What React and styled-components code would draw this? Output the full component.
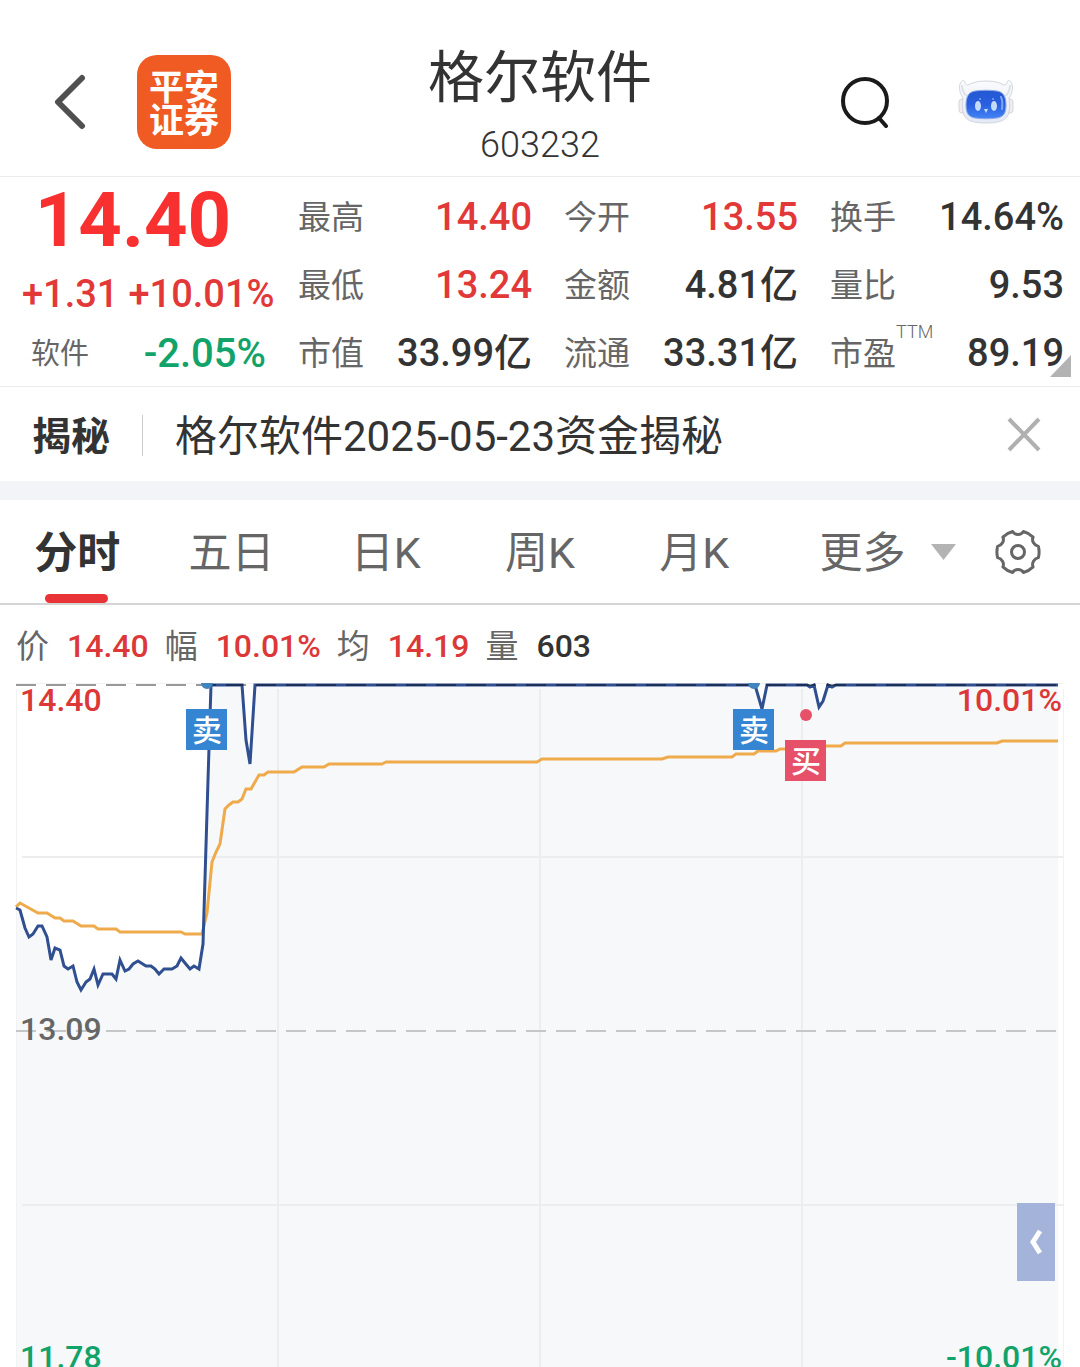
import { useState } from "react";
import styled, { createGlobalStyle } from "styled-components";

const GlobalStyle = createGlobalStyle`
  * {
    box-sizing: border-box;
  }

  body {
    margin: 0;
    background: #ffffff;
    color: #333333;
    font-family: Roboto, "Noto Sans CJK SC", sans-serif;
  }

  button {
    border: none;
    padding: 0;
    background: transparent;
    color: inherit;
    font: inherit;
    cursor: pointer;
  }
`;

const Page = styled.div`
  display: flex;
  flex-direction: column;
  min-height: 100vh;
`;

const Header = styled.header`
  display: grid;
  grid-template-columns: 1fr auto 1fr;
  align-items: center;
  padding: 34px 54px 6px;
  border-bottom: 1px solid #ebebeb;
`;

const HeaderSide = styled.div`
  display: flex;
  align-items: center;
  justify-content: ${(props) => (props.$end ? "flex-end" : "flex-start")};
  gap: ${(props) => (props.$end ? "68px" : "51px")};
  padding-right: ${(props) => (props.$end ? "12px" : "0")};
`;

const IconButton = styled.button`
  display: flex;
  flex: none;
`;

const BrokerLogo = styled.a`
  display: flex;
  flex-direction: column;
  align-items: center;
  justify-content: center;
  width: 94px;
  height: 94px;
  padding-bottom: 2px;
  border-radius: 20px;
  background: #f05a23;
  color: #ffffff;
  font-family: "Noto Sans CJK SC", sans-serif;
  font-size: 35px;
  font-weight: 700;
  line-height: 33px;
  text-decoration: none;
`;

const Title = styled.div`
  padding-top: 2px;
  text-align: center;
`;

const StockName = styled.h1`
  margin: 0;
  font-size: 56px;
  font-weight: 400;
  line-height: 84px;
`;

const StockCode = styled.p`
  margin: 0;
  font-size: 36px;
  font-weight: 300;
  line-height: 50px;
`;

const Quote = styled.section`
  position: relative;
  display: grid;
  grid-template-columns: 266px 1fr;
  column-gap: 32px;
  padding-right: 16px;
  border-bottom: 1px solid #ebebeb;
`;

const PriceColumn = styled.div`
  display: flex;
  flex-direction: column;
  padding-top: 1px;
`;

const Price = styled.strong`
  color: #f93030;
  font-size: 76px;
  font-weight: 700;
  line-height: 84px;
  text-align: center;
`;

const Change = styled.div`
  display: flex;
  gap: 10px;
  padding-left: 22px;
  color: #e23838;
  font-size: 38px;
  font-weight: 500;
  line-height: 64px;
  white-space: nowrap;
`;

const Sector = styled.div`
  display: flex;
  align-items: center;
  justify-content: space-between;
  padding-left: 31px;
  color: #666666;
  font-size: 29px;
  line-height: 56px;
`;

const SectorChange = styled.span`
  color: #12a36a;
  font-size: 40px;
  font-weight: 500;
`;

const Stats = styled.dl`
  display: grid;
  grid-template-columns: repeat(3, 1fr);
  column-gap: 32px;
  margin: 0;
  padding-top: 5px;
`;

const Stat = styled.div`
  display: flex;
  align-items: center;
  justify-content: space-between;
  height: 68px;
`;

const StatLabel = styled.dt`
  display: flex;
  padding-top: 4px;
  color: #666666;
  font-size: 33px;
  line-height: 64px;
  white-space: nowrap;
`;

const StatNote = styled.sup`
  font-size: 18px;
  font-weight: 300;
  line-height: 20px;
`;

const StatValue = styled.dd`
  margin: 0;
  padding-top: 2px;
  color: ${(props) => (props.$up ? "#e23838" : "#333333")};
  font-size: 38px;
  font-weight: 500;
  line-height: 66px;
  white-space: nowrap;
`;

const Corner = styled.button`
  position: absolute;
  right: 9px;
  bottom: 9px;
  width: 21px;
  height: 22px;
  background: #b3b3b3;
  clip-path: polygon(100% 0, 100% 100%, 0 100%);
`;

const News = styled.section`
  display: flex;
  align-items: center;
  height: 94px;
  padding: 2px 39px 0 32px;
`;

const NewsTag = styled.strong`
  padding: 4px 32px 0 0;
  font-size: 39px;
  font-weight: 700;
  line-height: 60px;
`;

const NewsLink = styled.a`
  flex: 1;
  padding-top: 4px;
  color: inherit;
  font-size: 42px;
  line-height: 60px;
  text-decoration: none;
`;

const Divider = styled.span`
  width: 1px;
  height: 41px;
  margin-right: 32px;
  background: #cccccc;
`;

const Band = styled.div`
  height: 19px;
  background: #f3f4f8;
`;

const Tabs = styled.nav`
  display: grid;
  grid-template-columns: repeat(5, minmax(0, 1fr)) minmax(0, 2fr);
  border-bottom: 2px solid #d4d4d4;
`;

const Tab = styled.button`
  position: relative;
  height: 103px;
  padding-bottom: 5px;
  color: ${(props) => (props.$active ? "#333333" : "#666666")};
  font-size: 43px;
  font-weight: ${(props) => (props.$active ? 700 : 400)};

  &::after {
    content: "";
    display: ${(props) => (props.$active ? "block" : "none")};
    position: absolute;
    left: calc(50% - 32px);
    bottom: 0;
    width: 63px;
    height: 9px;
    border-radius: 5px;
    background: #e83436;
  }
`;

const TabTools = styled.div`
  display: flex;
  align-items: center;
  justify-content: space-between;
  padding: 0 39px 0 48px;
`;

const MoreButton = styled.button`
  display: flex;
  align-items: center;
  gap: 26px;
  color: #666666;
  font-size: 43px;

  span {
    padding-bottom: 5px;
  }
`;

const Legend = styled.dl`
  display: flex;
  gap: 16px;
  margin: 0;
  padding: 8px 16px 0;
  line-height: 67px;
`;

const LegendItem = styled.div`
  display: flex;
  gap: 18px;
`;

const LegendLabel = styled.dt`
  color: #666666;
  font-size: 33px;
`;

const LegendValue = styled.dd`
  margin: 0;
  color: ${(props) => (props.$up ? "#dc3838" : "#333333")};
  font-size: 32px;
  font-weight: 500;
`;

const ChartArea = styled.section`
  position: relative;

  svg {
    display: block;
    width: 100%;
    height: auto;
  }
`;

const AxisText = styled.text`
  fill: ${(props) => props.$color};
  font-size: 32px;
  font-weight: 500;
`;

const BadgeText = styled.text`
  fill: #ffffff;
  font-size: 30px;
  font-weight: 500;
  text-anchor: middle;
`;

const DrawerButton = styled.button`
  position: absolute;
  right: 25px;
  bottom: 86px;
  display: flex;
  align-items: center;
  justify-content: center;
  width: 38px;
  height: 78px;
  background: #a3b3da;

  svg {
    width: 16px;
  }
`;

const stats = [
  { label: "最高", value: "14.40", up: true },
  { label: "今开", value: "13.55", up: true },
  { label: "换手", value: "14.64%" },
  { label: "最低", value: "13.24", up: true },
  { label: "金额", value: "4.81亿" },
  { label: "量比", value: "9.53" },
  { label: "市值", value: "33.99亿" },
  { label: "流通", value: "33.31亿" },
  { label: "市盈", value: "89.19", note: "TTM" },
];

const legend = [
  { label: "价", value: "14.40", up: true },
  { label: "幅", value: "10.01%", up: true },
  { label: "均", value: "14.19", up: true },
  { label: "量", value: "603" },
];

const tabs = ["分时", "五日", "日K", "周K", "月K"];

const pricePoints =
  "16,228 20,230 25,248 29,257 33,254 38,246 42,246 47,257 51,280 55,268 60,270 64,286 68,289 73,286 77,302 81,310 86,302 90,299 94,289 98,305 103,294 112,294 116,299 120,280 125,291 129,289 133,284 138,281 146,286 151,286 155,289 159,294 164,289 172,289 177,286 181,278 185,283 190,289 194,286 199,289 203,264 208,100 211,5 242,5 246,60 250,84 255,5 755,5 762,29 767,5 807,5 810,7 814,5 819,27 823,21 828,5 832,7 836,5 1058,5";

const averagePoints =
  "16,227 20,223 38,233 47,233 55,238 60,238 64,241 73,241 81,246 94,246 98,249 116,249 120,252 181,252 185,254 202,254 207,233 212,182 216,172 220,164 225,129 229,125 233,122 238,122 242,119 246,109 251,109 259,95 264,95 268,92 294,92 302,87 324,87 329,84 382,84 386,82 537,82 542,79 662,79 668,77 732,77 736,74 754,74 758,71 776,71 780,69 800,69 804,66 841,66 845,63 997,63 1002,61 1058,61";

const trades = [
  { x: 186, y: 29, text: "卖", color: "#3585d2" },
  { x: 733, y: 29, text: "卖", color: "#3585d2" },
  { x: 785, y: 60, text: "买", color: "#e65069" },
];

function RobotIcon() {
  return (
    <svg width="56" height="46" viewBox="0 0 56 46" fill="none">
      <defs>
        <linearGradient id="shell" x1="0" y1="0" x2="0" y2="1">
          <stop offset="0" stopColor="#fbfbfc" />
          <stop offset="1" stopColor="#e3e9f5" />
        </linearGradient>
        <linearGradient id="screen" x1="0" y1="0" x2="0" y2="1">
          <stop offset="0" stopColor="#2458d2" />
          <stop offset="0.5" stopColor="#2a5fe0" />
          <stop offset="1" stopColor="#4484f4" />
        </linearGradient>
      </defs>
      <rect x="1" y="20" width="7" height="14" rx="3" fill="#f1ecee" stroke="#cfcfd6" strokeWidth="0.8" />
      <rect x="48" y="20" width="7" height="14" rx="3" fill="#f1ecee" stroke="#cfcfd6" strokeWidth="0.8" />
      <path
        d="M5 19C2 15 0 8 3 3C4 1 6 1 7 3C7 6 9 7 12 5C20 1 36 1 44 5C47 7 49 6 49 3C50 1 52 1 53 3C56 8 54 15 51 19C52 26 52 33 49 38C45 43 37 44 28 44C19 44 11 43 7 38C4 33 4 26 5 19Z"
        fill="url(#shell)"
        stroke="#cdd1da"
        strokeWidth="0.9"
      />
      <path
        d="M4 6C4 11 6 15 9 17M52 6C52 11 50 15 47 17"
        stroke="#dfe1e6"
        strokeWidth="2"
      />
      <path
        d="M17 12C24 11 32 11 39 12C45 13 48 17 48 26C48 35 45 38 39 39C32 40 24 40 17 39C11 38 8 35 8 26C8 17 11 13 17 12Z"
        fill="url(#screen)"
        stroke="#8fa9e6"
        strokeWidth="1"
      />
      <path d="M43 18Q45 22 44 30" stroke="#7ea5f6" strokeWidth="2" strokeLinecap="round" />
      <ellipse cx="20" cy="27" rx="3" ry="5" fill="#c4dcff" />
      <ellipse cx="36" cy="27" rx="3" ry="5" fill="#c4dcff" />
      <circle cx="22" cy="20" r="1" fill="#7ea5f6" />
      <circle cx="35" cy="20" r="1" fill="#7ea5f6" />
      <path d="M26 30H30L28 34Z" fill="#c4dcff" />
    </svg>
  );
}

function GearIcon() {
  return (
    <svg width="46" height="46" viewBox="-23 -23 46 46" fill="none" stroke="#666666" strokeWidth="3">
      <path
        d="M20.4 -5.6Q21.8 0 20.4 5.6C16 6.6 13.4 11 15.1 14.9Q11 19 5.4 20.5C3 16.6 -3 16.6 -5.4 20.5Q-11 19 -15.1 14.9C-13.4 11 -16 6.6 -20.4 5.6Q-21.8 0 -20.4 -5.6C-16 -6.6 -13.4 -11 -15.1 -14.9Q-11 -19 -5.4 -20.5C-3 -16.6 3 -16.6 5.4 -20.5Q11 -19 15.1 -14.9C13.4 -11 16 -6.6 20.4 -5.6Z"
        strokeLinejoin="round"
      />
      <circle r="6.5" />
    </svg>
  );
}

function IntradayChart() {
  return (
    <svg viewBox="0 0 1080 687" role="img" aria-label="分时走势">
      <polygon points={`16,687 ${pricePoints} 1058,687`} fill="#f6f8fa" />
      <path
        d="M278 9V687M540 9V687M802 9V687M22 177H1063M22 525H1063"
        stroke="#ebedef"
        strokeWidth="2"
      />
      <path d="M16.5 9V687M1063.5 9V687M16 3.5H1063" stroke="#f1f2f4" />

      <polyline points={averagePoints} fill="none" stroke="#efaa4c" strokeWidth="3" />
      <polyline points={pricePoints} fill="none" stroke="#2f4f90" strokeWidth="3" />
      <path d="M16 5H1058" stroke="#000000" strokeOpacity="0.4" strokeWidth="2" strokeDasharray="20 10" />
      <path d="M16 351H1056" stroke="#c4c6c8" strokeWidth="2" strokeDasharray="20 10" />

      {/* lower halves of the sell dots, cut off by the top edge */}
      <path d="M201 3H213A6 6 0 0 1 201 3M748 3H760A6 6 0 0 1 748 3" fill="#3f84bd" />

      <AxisText x="20" y="31" $color="#dc3838">14.40</AxisText>
      <AxisText x="1062" y="31" textAnchor="end" $color="#dc3838">10.01%</AxisText>
      <AxisText x="20" y="360" $color="#666666">13.09</AxisText>
      <AxisText x="20" y="688" $color="#12a36a">11.78</AxisText>
      <AxisText x="1062" y="688" textAnchor="end" $color="#12a36a">-10.01%</AxisText>

      <circle cx="806" cy="35" r="6" fill="#e65069" />
      {trades.map((t) => (
        <g key={t.x}>
          <rect x={t.x} y={t.y} width="41" height="41" fill={t.color} />
          <BadgeText x={t.x + 21} y={t.y + 32}>
            {t.text}
          </BadgeText>
        </g>
      ))}
    </svg>
  );
}

function App() {
  const [activeTab, setActiveTab] = useState("分时");
  const [showNews, setShowNews] = useState(true);

  return (
    <Page>
      <GlobalStyle />
      <Header>
        <HeaderSide>
          <IconButton aria-label="返回">
            <svg width="32" height="56" viewBox="0 0 32 56" fill="none">
              <path
                d="M28 4L4 28L28 52"
                stroke="#505050"
                strokeWidth="6"
                strokeLinecap="round"
                strokeLinejoin="round"
              />
            </svg>
          </IconButton>
          <BrokerLogo href="#">
            平安
            <br />
            证券
          </BrokerLogo>
        </HeaderSide>
        <Title>
          <StockName>格尔软件</StockName>
          <StockCode>603232</StockCode>
        </Title>
        <HeaderSide $end>
          <IconButton aria-label="搜索">
            <svg width="50" height="52" viewBox="0 0 50 52" fill="none" stroke="#1a1a1a" strokeLinecap="round">
              <circle cx="25" cy="25" r="22" strokeWidth="4" />
              <path d="M39 42L46 50" strokeWidth="4" />
            </svg>
          </IconButton>
          <IconButton aria-label="智能助手">
            <RobotIcon />
          </IconButton>
        </HeaderSide>
      </Header>

      <Quote>
        <PriceColumn>
          <Price>14.40</Price>
          <Change>
            <span>+1.31</span>
            <span>+10.01%</span>
          </Change>
          <Sector>
            软件 <SectorChange>-2.05%</SectorChange>
          </Sector>
        </PriceColumn>
        <Stats>
          {stats.map((s) => (
            <Stat key={s.label}>
              <StatLabel>
                {s.label}
                {s.note && <StatNote>{s.note}</StatNote>}
              </StatLabel>
              <StatValue $up={s.up}>{s.value}</StatValue>
            </Stat>
          ))}
        </Stats>
        <Corner aria-label="展开" />
      </Quote>

      {showNews && (
        <News>
          <NewsTag>揭秘</NewsTag>
          <Divider />
          <NewsLink href="#">格尔软件2025-05-23资金揭秘</NewsLink>
          <IconButton aria-label="关闭" onClick={() => setShowNews(false)}>
            <svg width="34" height="36" viewBox="0 0 34 36" stroke="#b0b0b0" strokeWidth="4">
              <path d="M2 2L32 33M32 2L2 33" />
            </svg>
          </IconButton>
        </News>
      )}
      <Band />

      <Tabs>
        {tabs.map((name) => (
          <Tab key={name} $active={name === activeTab} onClick={() => setActiveTab(name)}>
            {name}
          </Tab>
        ))}
        <TabTools>
          <MoreButton>
            <span>更多</span>
            <svg width="25" height="16" viewBox="0 0 25 16">
              <path d="M0 0H25L12.5 16Z" fill="#b3b3b3" />
            </svg>
          </MoreButton>
          <IconButton aria-label="设置">
            <GearIcon />
          </IconButton>
        </TabTools>
      </Tabs>

      <Legend>
        {legend.map((item) => (
          <LegendItem key={item.label}>
            <LegendLabel>{item.label}</LegendLabel>
            <LegendValue $up={item.up}>{item.value}</LegendValue>
          </LegendItem>
        ))}
      </Legend>

      <ChartArea>
        <IntradayChart />
        <DrawerButton aria-label="展开侧栏">
          <svg viewBox="0 0 16 28" fill="none">
            <path d="M12 3L5 14L12 25" stroke="#ffffff" strokeWidth="5" />
          </svg>
        </DrawerButton>
      </ChartArea>
    </Page>
  );
}

export default App;
